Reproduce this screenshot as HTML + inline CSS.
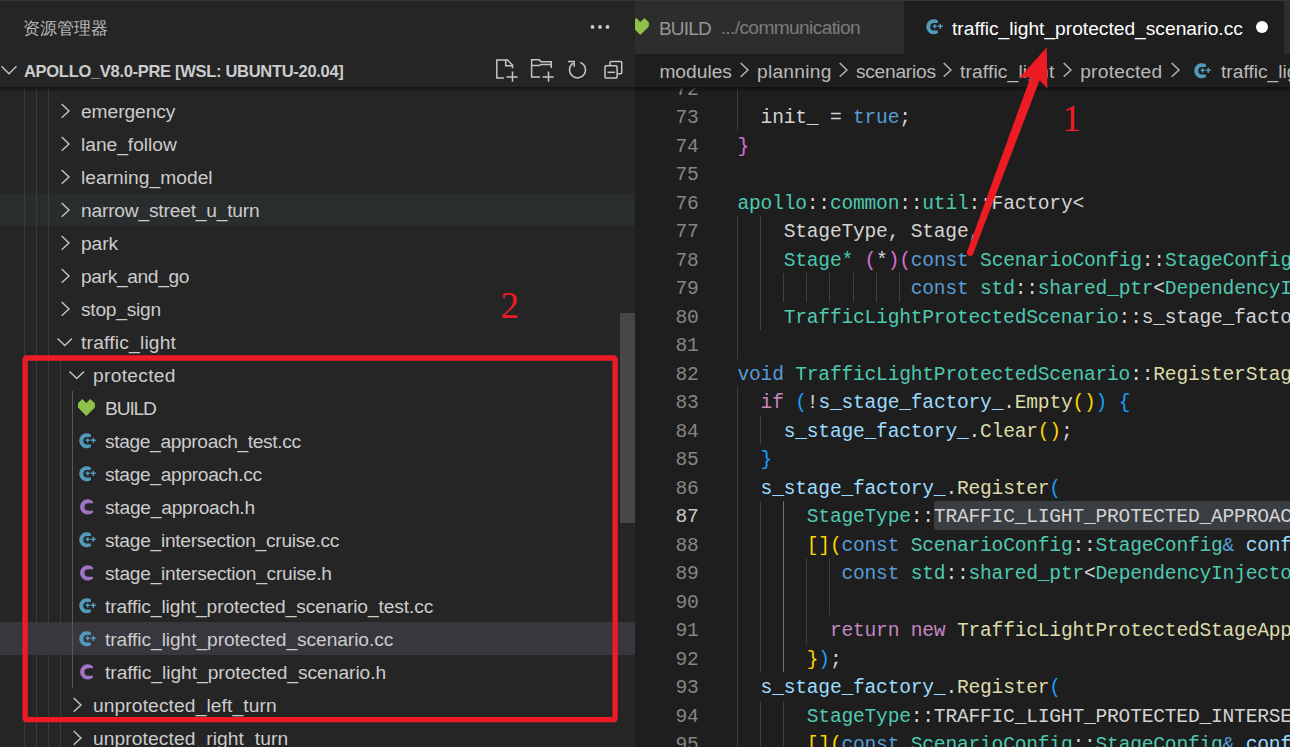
<!DOCTYPE html>
<html><head><meta charset="utf-8">
<style>
*{margin:0;padding:0;box-sizing:border-box}
html,body{width:1290px;height:747px;overflow:hidden;background:#1e1e1e;position:relative;font-family:"Liberation Sans",sans-serif}
.abs{position:absolute}
#side{position:absolute;left:0;top:0;width:635px;height:747px;background:#252526;overflow:hidden}
.row{position:absolute;left:0;width:635px;height:33px}
.rt{position:absolute;top:1px;line-height:33px;font-size:19.2px;color:#cccccc;white-space:pre}
.ic{position:absolute;line-height:0}
.ig{position:absolute;width:1px}
#code{position:absolute;left:0;top:0;width:1290px;height:747px;overflow:hidden}
.cl{position:absolute;left:737.5px;height:28.5px;line-height:28.5px;font-family:"Liberation Mono",monospace;font-size:19.6px;letter-spacing:-0.21px;white-space:pre}
.ln{position:absolute;left:640px;width:58.6px;letter-spacing:-0.21px;text-align:right;height:28.5px;line-height:28.5px;font-family:"Liberation Mono",monospace;font-size:19.6px}
.bct{top:1px}
</style></head><body>
<div id="code">
<div class="abs" style="left:934px;top:501px;width:400px;height:29px;background:#3a3d41;border-radius:3px"></div>
<div class="ig" style="left:737px;top:73.7px;height:57.0px;background:#404040"></div><div class="ig" style="left:737px;top:216.2px;height:142.5px;background:#404040"></div><div class="ig" style="left:737px;top:387.2px;height:370.5px;background:#404040"></div><div class="ig" style="left:760px;top:216.2px;height:114.0px;background:#404040"></div><div class="ig" style="left:783px;top:273.2px;height:28.5px;background:#404040"></div><div class="ig" style="left:806px;top:273.2px;height:28.5px;background:#404040"></div><div class="ig" style="left:829px;top:273.2px;height:28.5px;background:#404040"></div><div class="ig" style="left:853px;top:273.2px;height:28.5px;background:#404040"></div><div class="ig" style="left:876px;top:273.2px;height:28.5px;background:#404040"></div><div class="ig" style="left:899px;top:273.2px;height:28.5px;background:#404040"></div><div class="ig" style="left:760px;top:415.7px;height:28.5px;background:#404040"></div><div class="ig" style="left:760px;top:501.2px;height:171.0px;background:#404040"></div><div class="ig" style="left:783px;top:501.2px;height:171.0px;background:#707070"></div><div class="ig" style="left:806px;top:558.2px;height:85.5px;background:#404040"></div><div class="ig" style="left:829px;top:558.2px;height:57.0px;background:#404040"></div><div class="ig" style="left:760px;top:700.7px;height:57.0px;background:#404040"></div><div class="ig" style="left:783px;top:700.7px;height:57.0px;background:#404040"></div><div class="cl" style="top:75.50px"></div><div class="ln" style="top:75.50px;color:#858585">72</div><div class="cl" style="top:104.00px"><span style="color:#d4d4d4">  init_ = </span><span style="color:#569cd6">true</span><span style="color:#d4d4d4">;</span></div><div class="ln" style="top:104.00px;color:#858585">73</div><div class="cl" style="top:132.50px"><span style="color:#da70d6">}</span></div><div class="ln" style="top:132.50px;color:#858585">74</div><div class="cl" style="top:161.00px"></div><div class="ln" style="top:161.00px;color:#858585">75</div><div class="cl" style="top:189.50px"><span style="color:#4ec9b0">apollo</span><span style="color:#d4d4d4">::</span><span style="color:#4ec9b0">common</span><span style="color:#d4d4d4">::</span><span style="color:#4ec9b0">util</span><span style="color:#d4d4d4">::Factory&lt;</span></div><div class="ln" style="top:189.50px;color:#858585">76</div><div class="cl" style="top:218.00px"><span style="color:#d4d4d4">    StageType, Stage,</span></div><div class="ln" style="top:218.00px;color:#858585">77</div><div class="cl" style="top:246.50px"><span style="color:#4ec9b0">    Stage*</span><span style="color:#d4d4d4"> </span><span style="color:#da70d6">(</span><span style="color:#d4d4d4">*</span><span style="color:#da70d6">)</span><span style="color:#da70d6">(</span><span style="color:#569cd6">const</span><span style="color:#d4d4d4"> </span><span style="color:#4ec9b0">ScenarioConfig</span><span style="color:#d4d4d4">::</span><span style="color:#4ec9b0">StageConfig</span></div><div class="ln" style="top:246.50px;color:#858585">78</div><div class="cl" style="top:275.00px"><span style="color:#d4d4d4">               </span><span style="color:#569cd6">const</span><span style="color:#d4d4d4"> </span><span style="color:#4ec9b0">std</span><span style="color:#d4d4d4">::</span><span style="color:#4ec9b0">shared_ptr</span><span style="color:#d4d4d4">&lt;</span><span style="color:#4ec9b0">DependencyInjector</span></div><div class="ln" style="top:275.00px;color:#858585">79</div><div class="cl" style="top:303.50px"><span style="color:#4ec9b0">    TrafficLightProtectedScenario</span><span style="color:#d4d4d4">::s_stage_factory_</span></div><div class="ln" style="top:303.50px;color:#858585">80</div><div class="cl" style="top:332.00px"></div><div class="ln" style="top:332.00px;color:#858585">81</div><div class="cl" style="top:360.50px"><span style="color:#569cd6">void</span><span style="color:#d4d4d4"> </span><span style="color:#4ec9b0">TrafficLightProtectedScenario</span><span style="color:#d4d4d4">::</span><span style="color:#dcdcaa">RegisterStages</span></div><div class="ln" style="top:360.50px;color:#858585">82</div><div class="cl" style="top:389.00px"><span style="color:#d4d4d4">  </span><span style="color:#c586c0">if</span><span style="color:#d4d4d4"> </span><span style="color:#179fff">(</span><span style="color:#d4d4d4">!</span><span style="color:#9cdcfe">s_stage_factory_</span><span style="color:#d4d4d4">.</span><span style="color:#dcdcaa">Empty</span><span style="color:#ffd700">()</span><span style="color:#179fff">)</span><span style="color:#d4d4d4"> </span><span style="color:#179fff">{</span></div><div class="ln" style="top:389.00px;color:#858585">83</div><div class="cl" style="top:417.50px"><span style="color:#d4d4d4">    </span><span style="color:#9cdcfe">s_stage_factory_</span><span style="color:#d4d4d4">.</span><span style="color:#dcdcaa">Clear</span><span style="color:#ffd700">()</span><span style="color:#d4d4d4">;</span></div><div class="ln" style="top:417.50px;color:#858585">84</div><div class="cl" style="top:446.00px"><span style="color:#d4d4d4">  </span><span style="color:#179fff">}</span></div><div class="ln" style="top:446.00px;color:#858585">85</div><div class="cl" style="top:474.50px"><span style="color:#d4d4d4">  </span><span style="color:#9cdcfe">s_stage_factory_</span><span style="color:#d4d4d4">.</span><span style="color:#dcdcaa">Register</span><span style="color:#179fff">(</span></div><div class="ln" style="top:474.50px;color:#858585">86</div><div class="cl" style="top:503.00px"><span style="color:#d4d4d4">      </span><span style="color:#4ec9b0">StageType</span><span style="color:#d4d4d4">::</span><span style="color:#d4d4d4">TRAFFIC_LIGHT_PROTECTED_APPROACH,</span></div><div class="ln" style="top:503.00px;color:#c6c6c6">87</div><div class="cl" style="top:531.50px"><span style="color:#d4d4d4">      </span><span style="color:#ffd700">[](</span><span style="color:#569cd6">const</span><span style="color:#d4d4d4"> </span><span style="color:#4ec9b0">ScenarioConfig</span><span style="color:#d4d4d4">::</span><span style="color:#4ec9b0">StageConfig</span><span style="color:#569cd6">&amp;</span><span style="color:#d4d4d4"> </span><span style="color:#9cdcfe">config,</span></div><div class="ln" style="top:531.50px;color:#858585">88</div><div class="cl" style="top:560.00px"><span style="color:#d4d4d4">         </span><span style="color:#569cd6">const</span><span style="color:#d4d4d4"> </span><span style="color:#4ec9b0">std</span><span style="color:#d4d4d4">::</span><span style="color:#4ec9b0">shared_ptr</span><span style="color:#d4d4d4">&lt;</span><span style="color:#4ec9b0">DependencyInjector</span></div><div class="ln" style="top:560.00px;color:#858585">89</div><div class="cl" style="top:588.50px"></div><div class="ln" style="top:588.50px;color:#858585">90</div><div class="cl" style="top:617.00px"><span style="color:#d4d4d4">        </span><span style="color:#c586c0">return</span><span style="color:#d4d4d4"> </span><span style="color:#c586c0">new</span><span style="color:#d4d4d4"> </span><span style="color:#dcdcaa">TrafficLightProtectedStageApproach</span></div><div class="ln" style="top:617.00px;color:#858585">91</div><div class="cl" style="top:645.50px"><span style="color:#d4d4d4">      </span><span style="color:#ffd700">}</span><span style="color:#179fff">)</span><span style="color:#d4d4d4">;</span></div><div class="ln" style="top:645.50px;color:#858585">92</div><div class="cl" style="top:674.00px"><span style="color:#d4d4d4">  </span><span style="color:#9cdcfe">s_stage_factory_</span><span style="color:#d4d4d4">.</span><span style="color:#dcdcaa">Register</span><span style="color:#179fff">(</span></div><div class="ln" style="top:674.00px;color:#858585">93</div><div class="cl" style="top:702.50px"><span style="color:#d4d4d4">      </span><span style="color:#4ec9b0">StageType</span><span style="color:#d4d4d4">::TRAFFIC_LIGHT_PROTECTED_INTERSECTION_CRUISE,</span></div><div class="ln" style="top:702.50px;color:#858585">94</div><div class="cl" style="top:731.00px"><span style="color:#d4d4d4">      </span><span style="color:#ffd700">[](</span><span style="color:#569cd6">const</span><span style="color:#d4d4d4"> </span><span style="color:#4ec9b0">ScenarioConfig</span><span style="color:#d4d4d4">::</span><span style="color:#4ec9b0">StageConfig</span><span style="color:#569cd6">&amp;</span><span style="color:#d4d4d4"> </span><span style="color:#9cdcfe">config,</span></div><div class="ln" style="top:731.00px;color:#858585">95</div>
</div>
<div id="side">
<div class="abs" style="left:0;top:0;width:635px;height:1px;background:#353535"></div>
<div class="abs" style="left:23px;top:16px;font-size:16.5px;line-height:24px;color:#bbbbbb">资源管理器</div>
<div class="abs" style="left:585px;top:20px;line-height:0"><svg width="30" height="14" viewBox="0 0 30 14"><circle cx="7.5" cy="6.9" r="1.9" fill="#cccccc"/><circle cx="15" cy="6.9" r="1.9" fill="#cccccc"/><circle cx="22.5" cy="6.9" r="1.9" fill="#cccccc"/></svg></div>
<div class="row" style="top:94px;"><div class="ic" style="left:60px;top:8px"><svg width="12" height="18" viewBox="0 0 12 18"><polyline points="1.7,2 9,9 1.7,15.7" fill="none" stroke="#c5c5c5" stroke-width="1.4"/></svg></div><div class="rt" style="left:81px;letter-spacing:-0.06px">emergency</div></div><div class="row" style="top:127px;"><div class="ic" style="left:60px;top:8px"><svg width="12" height="18" viewBox="0 0 12 18"><polyline points="1.7,2 9,9 1.7,15.7" fill="none" stroke="#c5c5c5" stroke-width="1.4"/></svg></div><div class="rt" style="left:81px;letter-spacing:-0.022px">lane_follow</div></div><div class="row" style="top:160px;"><div class="ic" style="left:60px;top:8px"><svg width="12" height="18" viewBox="0 0 12 18"><polyline points="1.7,2 9,9 1.7,15.7" fill="none" stroke="#c5c5c5" stroke-width="1.4"/></svg></div><div class="rt" style="left:81px;letter-spacing:0.032px">learning_model</div></div><div class="row" style="top:193px;background:#2a2d2e;"><div class="ic" style="left:60px;top:8px"><svg width="12" height="18" viewBox="0 0 12 18"><polyline points="1.7,2 9,9 1.7,15.7" fill="none" stroke="#c5c5c5" stroke-width="1.4"/></svg></div><div class="rt" style="left:81px;letter-spacing:-0.195px">narrow_street_u_turn</div></div><div class="row" style="top:226px;"><div class="ic" style="left:60px;top:8px"><svg width="12" height="18" viewBox="0 0 12 18"><polyline points="1.7,2 9,9 1.7,15.7" fill="none" stroke="#c5c5c5" stroke-width="1.4"/></svg></div><div class="rt" style="left:81px;letter-spacing:-0.06px">park</div></div><div class="row" style="top:259px;"><div class="ic" style="left:60px;top:8px"><svg width="12" height="18" viewBox="0 0 12 18"><polyline points="1.7,2 9,9 1.7,15.7" fill="none" stroke="#c5c5c5" stroke-width="1.4"/></svg></div><div class="rt" style="left:81px;letter-spacing:-0.36px">park_and_go</div></div><div class="row" style="top:292px;"><div class="ic" style="left:60px;top:8px"><svg width="12" height="18" viewBox="0 0 12 18"><polyline points="1.7,2 9,9 1.7,15.7" fill="none" stroke="#c5c5c5" stroke-width="1.4"/></svg></div><div class="rt" style="left:81px;letter-spacing:-0.249px">stop_sign</div></div><div class="row" style="top:325px;"><div class="ic" style="left:55.7px;top:12px"><svg width="18" height="10" viewBox="0 0 18 10"><polyline points="1.5,1.5 8.8,8.5 16,1.5" fill="none" stroke="#c5c5c5" stroke-width="1.4"/></svg></div><div class="rt" style="left:81px;letter-spacing:0.209px">traffic_light</div></div><div class="row" style="top:358px;"><div class="ic" style="left:67.7px;top:12px"><svg width="18" height="10" viewBox="0 0 18 10"><polyline points="1.5,1.5 8.8,8.5 16,1.5" fill="none" stroke="#c5c5c5" stroke-width="1.4"/></svg></div><div class="rt" style="left:93px;letter-spacing:0.306px">protected</div></div><div class="row" style="top:391px;"><div class="ic" style="left:78.2px;top:8px"><svg width="17" height="17" viewBox="0 0 17 17"><polygon points="0,4.3 4.3,0 8.3,4.1 12.3,0 16.9,4.3 16.9,8.5 8.3,17 0,8.5" fill="#8dc149"/></svg></div><div class="rt" style="left:105px;letter-spacing:-1.137px">BUILD</div></div><div class="row" style="top:424px;"><div class="ic" style="left:79px;top:8.5px"><svg width="18" height="17" viewBox="0 0 18 17"><path d="M11.9 1.44A7.55 7.55 0 1 0 11.9 14.06L11.9 11.55L8.1 11.55A3.8 3.8 0 0 1 8.1 3.95L11.9 3.95Z" fill="#519aba"/><path d="M6.6 7.3h4.2M8.7 5.2v4.2M11.7 7.3h5.2M14.3 4.7v5.2" stroke="#519aba" stroke-width="1.5"/></svg></div><div class="rt" style="left:105px;letter-spacing:-0.365px">stage_approach_test.cc</div></div><div class="row" style="top:457px;"><div class="ic" style="left:79px;top:8.5px"><svg width="18" height="17" viewBox="0 0 18 17"><path d="M11.9 1.44A7.55 7.55 0 1 0 11.9 14.06L11.9 11.55L8.1 11.55A3.8 3.8 0 0 1 8.1 3.95L11.9 3.95Z" fill="#519aba"/><path d="M6.6 7.3h4.2M8.7 5.2v4.2M11.7 7.3h5.2M14.3 4.7v5.2" stroke="#519aba" stroke-width="1.5"/></svg></div><div class="rt" style="left:105px;letter-spacing:-0.315px">stage_approach.cc</div></div><div class="row" style="top:490px;"><div class="ic" style="left:80px;top:8.5px"><svg width="16" height="16" viewBox="0 0 16 16"><path d="M13 2.39A7.65 7.65 0 1 0 13 13.51L13 11.7L8.2 11.7A3.75 3.75 0 0 1 8.2 4.2L13 4.2Z" fill="#a074c4"/></svg></div><div class="rt" style="left:105px;letter-spacing:-0.235px">stage_approach.h</div></div><div class="row" style="top:523px;"><div class="ic" style="left:79px;top:8.5px"><svg width="18" height="17" viewBox="0 0 18 17"><path d="M11.9 1.44A7.55 7.55 0 1 0 11.9 14.06L11.9 11.55L8.1 11.55A3.8 3.8 0 0 1 8.1 3.95L11.9 3.95Z" fill="#519aba"/><path d="M6.6 7.3h4.2M8.7 5.2v4.2M11.7 7.3h5.2M14.3 4.7v5.2" stroke="#519aba" stroke-width="1.5"/></svg></div><div class="rt" style="left:105px;letter-spacing:-0.284px">stage_intersection_cruise.cc</div></div><div class="row" style="top:556px;"><div class="ic" style="left:80px;top:8.5px"><svg width="16" height="16" viewBox="0 0 16 16"><path d="M13 2.39A7.65 7.65 0 1 0 13 13.51L13 11.7L8.2 11.7A3.75 3.75 0 0 1 8.2 4.2L13 4.2Z" fill="#a074c4"/></svg></div><div class="rt" style="left:105px;letter-spacing:-0.255px">stage_intersection_cruise.h</div></div><div class="row" style="top:589px;"><div class="ic" style="left:79px;top:8.5px"><svg width="18" height="17" viewBox="0 0 18 17"><path d="M11.9 1.44A7.55 7.55 0 1 0 11.9 14.06L11.9 11.55L8.1 11.55A3.8 3.8 0 0 1 8.1 3.95L11.9 3.95Z" fill="#519aba"/><path d="M6.6 7.3h4.2M8.7 5.2v4.2M11.7 7.3h5.2M14.3 4.7v5.2" stroke="#519aba" stroke-width="1.5"/></svg></div><div class="rt" style="left:105px;letter-spacing:-0.106px">traffic_light_protected_scenario_test.cc</div></div><div class="row" style="top:622px;background:#37373d;"><div class="ic" style="left:79px;top:8.5px"><svg width="18" height="17" viewBox="0 0 18 17"><path d="M11.9 1.44A7.55 7.55 0 1 0 11.9 14.06L11.9 11.55L8.1 11.55A3.8 3.8 0 0 1 8.1 3.95L11.9 3.95Z" fill="#519aba"/><path d="M6.6 7.3h4.2M8.7 5.2v4.2M11.7 7.3h5.2M14.3 4.7v5.2" stroke="#519aba" stroke-width="1.5"/></svg></div><div class="rt" style="left:105px;letter-spacing:-0.074px">traffic_light_protected_scenario.cc</div></div><div class="row" style="top:655px;"><div class="ic" style="left:80px;top:8.5px"><svg width="16" height="16" viewBox="0 0 16 16"><path d="M13 2.39A7.65 7.65 0 1 0 13 13.51L13 11.7L8.2 11.7A3.75 3.75 0 0 1 8.2 4.2L13 4.2Z" fill="#a074c4"/></svg></div><div class="rt" style="left:105px;letter-spacing:-0.033px">traffic_light_protected_scenario.h</div></div><div class="row" style="top:688px;"><div class="ic" style="left:72px;top:8px"><svg width="12" height="18" viewBox="0 0 12 18"><polyline points="1.7,2 9,9 1.7,15.7" fill="none" stroke="#c5c5c5" stroke-width="1.4"/></svg></div><div class="rt" style="left:93px;letter-spacing:0.117px">unprotected_left_turn</div></div><div class="row" style="top:721px;"><div class="ic" style="left:72px;top:8px"><svg width="12" height="18" viewBox="0 0 12 18"><polyline points="1.7,2 9,9 1.7,15.7" fill="none" stroke="#c5c5c5" stroke-width="1.4"/></svg></div><div class="rt" style="left:93px;letter-spacing:0.1px">unprotected_right_turn</div></div><div class="ig" style="left:24px;top:87px;height:660px;background:#3a3a3a"></div><div class="ig" style="left:36px;top:87px;height:660px;background:#3a3a3a"></div><div class="ig" style="left:48px;top:87px;height:660px;background:#3a3a3a"></div><div class="ig" style="left:60px;top:358px;height:389px;background:#3a3a3a"></div><div class="ig" style="left:72px;top:391px;height:297px;background:#585858"></div>
<div class="abs" style="left:0;top:54px;width:635px;height:33px;background:#252526"></div>
<div class="abs" style="left:0;top:87px;width:635px;height:5px;background:linear-gradient(#121212,rgba(18,18,18,0))"></div>
<div class="abs" style="left:0;top:65px;line-height:0"><svg width="18" height="10" viewBox="0 0 18 10"><polyline points="1.5,1.3 9,8.8 16.5,1.3" fill="none" stroke="#c5c5c5" stroke-width="1.4"/></svg></div>
<div class="abs" style="left:24px;top:55px;line-height:33px;font-size:16.5px;font-weight:bold;color:#cccccc;white-space:pre;letter-spacing:-0.3px">APOLLO_V8.0-PRE [WSL: UBUNTU-20.04]</div>
<div class="abs" style="left:492px;top:55px;line-height:0"><svg width="30" height="30" viewBox="0 0 30 30" fill="none" stroke="#c5c5c5" stroke-width="1.5"><path d="M12 23.1H4.8V5H15.5L20.5 10V13.3"/><path d="M13.7 5V10.8H20.5"/><path d="M14.5 21.9H25.7M20.5 16.5V26.7"/></svg></div>
<div class="abs" style="left:528px;top:55px;line-height:0"><svg width="30" height="30" viewBox="0 0 30 30" fill="none" stroke="#c5c5c5" stroke-width="1.5"><path d="M12 21.9H3.6V4.8H11.2L12.9 6.8H23.3V13"/><path d="M3.6 10.6H11.2L12.9 9.6H23.3"/><path d="M14.5 21.9H25.7M20.5 16.5V26.7"/></svg></div>
<div class="abs" style="left:562px;top:55px;line-height:0"><svg width="30" height="30" viewBox="0 0 30 30" fill="none" stroke="#c5c5c5" stroke-width="1.5"><path d="M18.24 7.38A8 8 0 1 1 11.14 8.19"/><path d="M6 6.6H12.2V11.8"/></svg></div>
<div class="abs" style="left:600px;top:55px;line-height:0"><svg width="30" height="30" viewBox="0 0 30 30" fill="none" stroke="#c5c5c5" stroke-width="1.5"><path d="M10 10.8V7.6Q10 6.6 11 6.6H20.7Q21.7 6.6 21.7 7.6V17.7Q21.7 18.7 20.7 18.7H17.1"/><rect x="5" y="10.8" width="12.1" height="12.3" rx="1.2"/><path d="M7.6 17.3H15.1"/></svg></div>
<div class="abs" style="left:620px;top:313px;width:15px;height:210px;background:#474747"></div>
</div>
<div id="tabs" class="abs" style="left:635px;top:0;width:655px;height:54px;background:#252526;overflow:hidden">
 <div class="abs" style="left:0;top:1px;width:269px;height:53px;background:#2d2d2d"></div>
 <div class="abs" style="left:-3px;top:18px;line-height:0"><svg width="17" height="17" viewBox="0 0 17 17"><polygon points="0,4.3 4.3,0 8.3,4.1 12.3,0 16.9,4.3 16.9,8.5 8.3,17 0,8.5" fill="#8dc149"/></svg></div>
 <div class="abs" style="left:24px;top:1.5px;line-height:54px;font-size:19px;color:#969696;white-space:pre;letter-spacing:-0.8px">BUILD</div>
 <div class="abs" style="left:85.7px;top:1px;line-height:54px;font-size:19.2px;color:#7b7b7b;white-space:pre;letter-spacing:-0.65px">.../communication</div>
 <div class="abs" style="left:269px;top:1px;width:380px;height:53px;background:#1e1e1e"></div>
 <div class="abs" style="left:290.7px;top:18.5px;line-height:0"><svg width="18" height="17" viewBox="0 0 18 17"><path d="M11.9 1.44A7.55 7.55 0 1 0 11.9 14.06L11.9 11.55L8.1 11.55A3.8 3.8 0 0 1 8.1 3.95L11.9 3.95Z" fill="#519aba"/><path d="M6.6 7.3h4.2M8.7 5.2v4.2M11.7 7.3h5.2M14.3 4.7v5.2" stroke="#519aba" stroke-width="1.5"/></svg></div>
 <div class="abs" style="left:317px;top:2px;line-height:54px;font-size:19.2px;color:#ffffff;white-space:pre">traffic_light_protected_scenario.cc</div>
 <div class="abs" style="left:621px;top:21px;width:12px;height:12px;border-radius:6px;background:#ffffff"></div>
 <div class="abs" style="left:649px;top:1px;width:6px;height:53px;background:#2d2d2d"></div>
</div>
<div id="bc" class="abs" style="left:635px;top:54px;width:655px;height:33px;background:#1e1e1e;overflow:hidden;white-space:pre;font-size:19.2px;color:#b9b9b9;line-height:33px">
 <div class="abs bct" style="left:24.4px;letter-spacing:0px">modules</div><div class="abs bct" style="left:122.0px;letter-spacing:0.25px">planning</div><div class="abs bct" style="left:220.9px;letter-spacing:-0.25px">scenarios</div><div class="abs bct" style="left:325.0px;letter-spacing:0.15px">traffic_light</div><div class="abs bct" style="left:445.2px;letter-spacing:0.25px">protected</div><div class="abs bct" style="left:586.0px;letter-spacing:0px">traffic_light_protected_scenario.cc</div><div class="abs" style="left:104.1px;top:7px;line-height:0"><svg width="12" height="18" viewBox="0 0 12 18"><polyline points="1.7,2 9,9 1.7,15.7" fill="none" stroke="#b9b9b9" stroke-width="1.4"/></svg></div><div class="abs" style="left:203.1px;top:7px;line-height:0"><svg width="12" height="18" viewBox="0 0 12 18"><polyline points="1.7,2 9,9 1.7,15.7" fill="none" stroke="#b9b9b9" stroke-width="1.4"/></svg></div><div class="abs" style="left:306.7px;top:7px;line-height:0"><svg width="12" height="18" viewBox="0 0 12 18"><polyline points="1.7,2 9,9 1.7,15.7" fill="none" stroke="#b9b9b9" stroke-width="1.4"/></svg></div><div class="abs" style="left:426.9px;top:7px;line-height:0"><svg width="12" height="18" viewBox="0 0 12 18"><polyline points="1.7,2 9,9 1.7,15.7" fill="none" stroke="#b9b9b9" stroke-width="1.4"/></svg></div><div class="abs" style="left:535.2px;top:7px;line-height:0"><svg width="12" height="18" viewBox="0 0 12 18"><polyline points="1.7,2 9,9 1.7,15.7" fill="none" stroke="#b9b9b9" stroke-width="1.4"/></svg></div><div class="abs" style="left:559.1px;top:8.9px;line-height:0"><svg width="18" height="17" viewBox="0 0 18 17"><path d="M11.9 1.44A7.55 7.55 0 1 0 11.9 14.06L11.9 11.55L8.1 11.55A3.8 3.8 0 0 1 8.1 3.95L11.9 3.95Z" fill="#519aba"/><path d="M6.6 7.3h4.2M8.7 5.2v4.2M11.7 7.3h5.2M14.3 4.7v5.2" stroke="#519aba" stroke-width="1.5"/></svg></div>
</div>
<div class="abs" style="left:635px;top:87px;width:655px;height:5px;background:linear-gradient(#101010,rgba(16,16,16,0))"></div>
<div class="abs" style="left:635px;top:0;width:655px;height:1px;background:#353535"></div>
<svg class="abs" style="left:0;top:0" width="1290" height="747" viewBox="0 0 1290 747">
<rect x="25.1" y="358" width="590" height="361.7" rx="1.5" fill="none" stroke="#ed1c24" stroke-width="5.3"/>
<polygon points="967.1,251.7 1030.6,76.9 1019.3,78.0 1046.8,47.2 1047.4,88.5 1039.6,80.2 973.1,253.9" fill="#ed1c24"/>
<circle cx="970.1" cy="252.8" r="3.2" fill="#ed1c24"/>
</svg>
<div class="abs" style="left:1062.5px;top:99px;font-family:'Liberation Serif',serif;font-size:37px;line-height:40px;color:#ed1c24">1</div>
<div class="abs" style="left:500.5px;top:285.8px;font-family:'Liberation Serif',serif;font-size:37px;line-height:40px;color:#ed1c24">2</div>

</body></html>
